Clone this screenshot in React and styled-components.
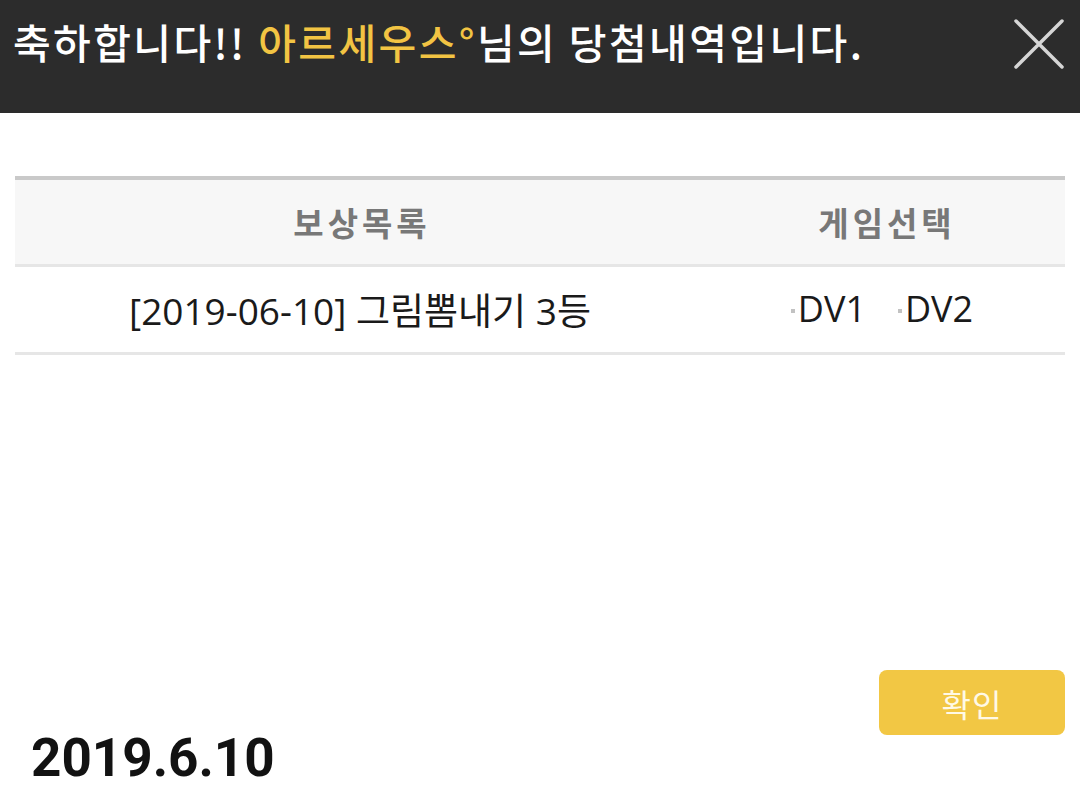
import React from 'react'
import styled, { createGlobalStyle } from 'styled-components'

const GlobalStyle = createGlobalStyle`
    html, body {
        margin: 0;
        padding: 0;
        background: #fff;
    }
    body {
        font-family: "Noto Sans CJK KR", "Noto Sans", sans-serif;
    }
`

const Page = styled.div`
    width: 1080px;
    height: 809px;
    display: flex;
    flex-direction: column;
    background: #fff;
    overflow: hidden;
`

const Header = styled.div`
    height: 113px;
    box-sizing: border-box;
    background: #2c2c2c;
    display: flex;
    align-items: flex-start;
    justify-content: space-between;
    padding: 16px 16px 0 13px;
`

const Title = styled.div`
    font-size: 41px;
    font-weight: 500;
    line-height: 50px;
    color: #fff;
    letter-spacing: 2.4px;
    white-space: nowrap;
`

const Name = styled.span`
    color: #f2c443;
`

const CloseButton = styled.button`
    width: 52px;
    height: 52px;
    padding: 0;
    margin-top: 2px;
    border: none;
    background: transparent;
    cursor: pointer;
`

const Content = styled.div`
    flex: 1;
    padding: 63px 15px 0;
`

const Table = styled.div`
    border-top: 4px solid #c9c9c9;
`

const Row = styled.div`
    display: grid;
    grid-template-columns: 690px 1fr;
    height: ${({ head }) => (head ? '84px' : '85px')};
    align-items: center;
    background: ${({ head }) => (head ? '#f7f7f7' : '#fff')};
    border-bottom: 3px solid #e6e6e6;
`

const HeadCell = styled.div`
    text-align: center;
    font-size: 33px;
    font-weight: 700;
    color: #787878;
    letter-spacing: 4px;
    padding-left: 4px;
`

const Cell = styled.div`
    text-align: center;
    font-family: "Open Sans", "Noto Sans CJK KR", sans-serif;
    font-size: 37px;
    font-weight: 400;
    color: #1a1a1a;
    padding-bottom: 2px;
`

const Games = styled.div`
    display: flex;
    justify-content: center;
    gap: 32px;
    padding-right: 6px;
    font-family: "Open Sans", sans-serif;
    font-size: 36px;
    color: #1a1a1a;
    padding-bottom: 2px;
`

const Game = styled.span`
    display: inline-flex;
    align-items: center;
    &::before {
        content: '';
        width: 4px;
        height: 4px;
        background: #c2c2c2;
        margin-right: 3px;
        margin-top: 4px;
    }
`

const ButtonRow = styled.div`
    display: flex;
    justify-content: flex-end;
    padding: 0 15px;
`

const ConfirmButton = styled.button`
    width: 186px;
    height: 65px;
    border: none;
    border-radius: 8px;
    background: #f2c744;
    color: #fff9e6;
    font-family: "Noto Sans CJK KR", sans-serif;
    font-size: 32px;
    font-weight: 400;
    letter-spacing: 1px;
    cursor: pointer;
`

const DateStamp = styled.div`
    font-family: Roboto, "Liberation Sans", sans-serif;
    font-size: 53px;
    font-weight: 700;
    line-height: 56px;
    color: #121212;
    padding: 0 0 23px 31px;
    margin-top: -5px;
`

const App = () => {
    return (
        <Page>
            <GlobalStyle />
            <Header>
                <Title>
                    축하합니다!! <Name>아르세우스°</Name>님의 당첨내역입니다.
                </Title>
                <CloseButton aria-label="닫기">
                    <svg width="52" height="52" viewBox="0 0 52 52">
                        <path d="M4 3 L50 49 M50 3 L4 49" stroke="#d6d6d6" strokeWidth="3.5" strokeLinecap="round" />
                    </svg>
                </CloseButton>
            </Header>
            <Content>
                <Table>
                    <Row head>
                        <HeadCell>보상목록</HeadCell>
                        <HeadCell>게임선택</HeadCell>
                    </Row>
                    <Row>
                        <Cell>[2019-06-10] 그림뽐내기 3등</Cell>
                        <Games>
                            <Game>DV1</Game>
                            <Game>DV2</Game>
                        </Games>
                    </Row>
                </Table>
            </Content>
            <ButtonRow>
                <ConfirmButton>확인</ConfirmButton>
            </ButtonRow>
            <DateStamp>2019.6.10</DateStamp>
        </Page>
    )
}

export default App
